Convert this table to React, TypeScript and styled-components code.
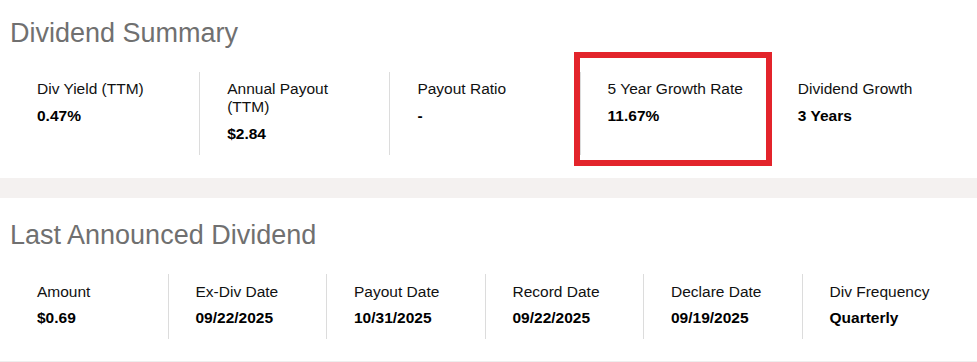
import React from "react";
import styled, { createGlobalStyle } from "styled-components";

const GlobalStyle = createGlobalStyle`
  html, body { margin: 0; padding: 0; background: #ffffff; }
  body { font-family: Arial, "Liberation Sans", sans-serif; color: #000; }
`;

const Page = styled.div`
  width: 977px;
  background: #ffffff;
`;

const Section = styled.section<{ $first?: boolean }>`
  padding: ${(p) => (p.$first ? "18px" : "22px")} 16px 22px 10px;
  border-bottom: ${(p) => (p.$first ? "none" : "1px solid #eeeeee")};
  padding-bottom: ${(p) => (p.$first ? "23px" : "22px")};
`;

const Band = styled.div`
  height: 20px;
  background: #f4f1f0;
`;

const Heading = styled.h2`
  margin: 0 0 24px 0;
  font-family: Arial, "Liberation Sans", sans-serif;
  font-weight: 400;
  font-size: 27px;
  line-height: 30px;
  color: #707070;
`;

const Grid = styled.div<{ $cols: number }>`
  display: grid;
  grid-template-columns: repeat(${(p) => p.$cols}, 1fr);
`;

const Cell = styled.div<{ $last?: boolean; $compact?: boolean }>`
  position: relative;
  padding: ${(p) => (p.$compact ? "9px 20px 12px 27px" : "8px 20px 12px 27px")};
  border-right: ${(p) => (p.$last ? "none" : "1px solid #dcdcdc")};
  min-width: 0;
`;

const Label = styled.div`
  font-size: 15.5px;
  line-height: 18px;
  color: #111;
`;

const Value = styled.div`
  margin-top: 8.5px;
  font-size: 15.5px;
  line-height: 18px;
  font-weight: 700;
  color: #000;
`;

const Highlight = styled.div`
  position: absolute;
  top: -20px;
  left: -7px;
  right: -2px;
  bottom: -11px;
  border: 6px solid #e3242b;
  pointer-events: none;
`;

type Item = { label: string; value: string; highlight?: boolean };

const summary: Item[] = [
  { label: "Div Yield (TTM)", value: "0.47%" },
  { label: "Annual Payout (TTM)", value: "$2.84" },
  { label: "Payout Ratio", value: "-" },
  { label: "5 Year Growth Rate", value: "11.67%", highlight: true },
  { label: "Dividend Growth", value: "3 Years" },
];

const announced: Item[] = [
  { label: "Amount", value: "$0.69" },
  { label: "Ex-Div Date", value: "09/22/2025" },
  { label: "Payout Date", value: "10/31/2025" },
  { label: "Record Date", value: "09/22/2025" },
  { label: "Declare Date", value: "09/19/2025" },
  { label: "Div Frequency", value: "Quarterly" },
];

const Stats: React.FC<{ items: Item[]; compact?: boolean }> = ({ items, compact }) => (
  <Grid $cols={items.length}>
    {items.map((it, i) => (
      <Cell key={it.label} $last={i === items.length - 1} $compact={compact}>
        <Label>{it.label}</Label>
        <Value>{it.value}</Value>
        {it.highlight && <Highlight />}
      </Cell>
    ))}
  </Grid>
);

export default function App() {
  return (
    <Page>
      <GlobalStyle />
      <Section $first>
        <Heading>Dividend Summary</Heading>
        <Stats items={summary} />
      </Section>
      <Band />
      <Section>
        <Heading>Last Announced Dividend</Heading>
        <Stats items={announced} compact />
      </Section>
    </Page>
  );
}
